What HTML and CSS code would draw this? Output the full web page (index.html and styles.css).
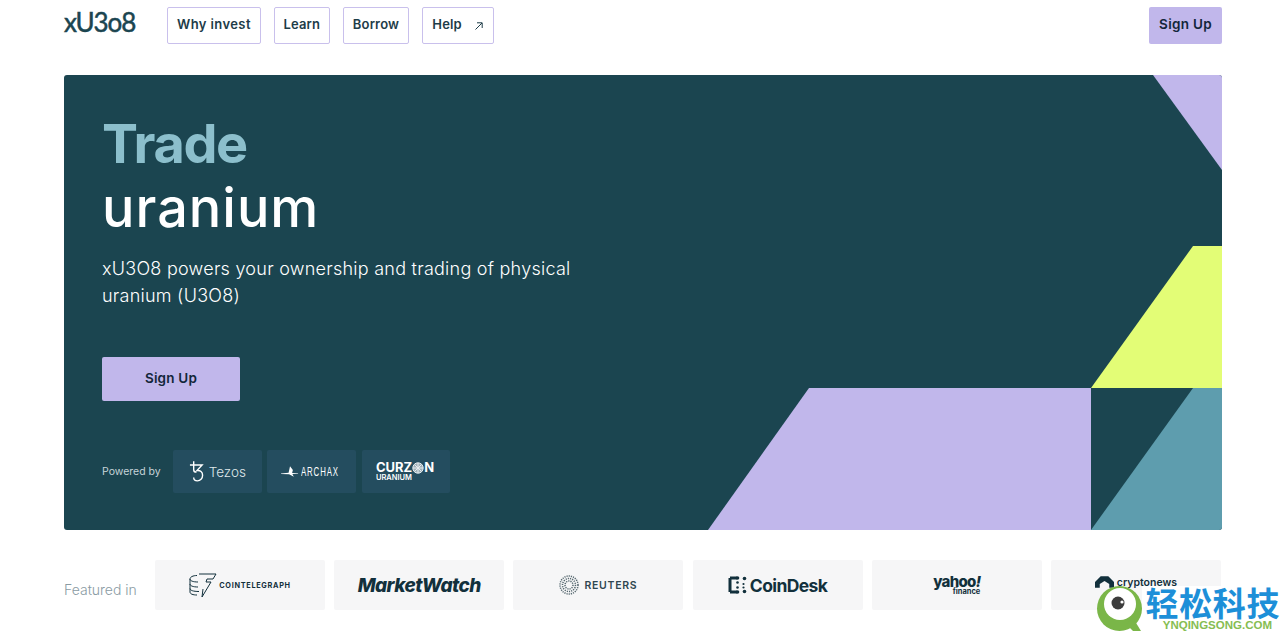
FILE: index.html
```html
<!DOCTYPE html>
<html>
  <head>
	<title>xU3O8 - Trade uranium</title>
	<meta charset="UTF-8">
	<meta name="viewport" content="width=device-width, initial-scale=1.0">
	<link rel="stylesheet" href="styles.css">
  </head>
  <body>
	<div class="page">
		<header class="topbar">
			<a class="brand">xU3o8</a>
			<nav class="menu">
				<a class="menu-item menu-why">Why invest</a>
				<a class="menu-item menu-learn">Learn</a>
				<a class="menu-item">Borrow</a>
				<a class="menu-item menu-help">Help
					<svg class="arrow" viewBox="0 0 10 10"><path d="M1.500 8.500 8 2M3 1.800h5.200V7"/></svg>
				</a>
			</nav>
			<a class="btn btn-small">Sign Up</a>
		</header>

		<section class="hero">
			<svg class="hero-art" viewBox="0 0 1158 455">
				<polygon class="lilac" points="1089,0 1158,0 1158,95"/>
				<polygon class="lime" points="1129,171 1158,171 1158,313 1027,313"/>
				<polygon class="lilac" points="745,313 1027,313 1027,455 644,455"/>
				<polygon class="teal" points="1129,313 1158,313 1158,455 1027,455"/>
			</svg>
			<h1 class="hero-title"><span class="accent">Trade</span><br>uranium</h1>
			<p class="hero-text">xU3O8 powers your ownership and trading of physical uranium (U3O8)</p>
			<a class="btn btn-large">Sign Up</a>
			<div class="powered">
				<span class="powered-label">Powered by</span>
				<div class="partner">
					<svg class="tezos-mark" viewBox="0 0 16 22"><path d="M5 0v7M1 4h13L8.500 10c3.500-.5 6 1.500 6 5 0 3.500-2.500 6-5.500 6-2.500 0-4-1.500-4-3.500M5 4v5c0 2 1 2.700 3 2.700"/></svg>
					<span class="tezos">Tezos</span>
				</div>
				<div class="partner">
					<svg class="archax-mark" viewBox="0 0 20 11"><path d="M0 7.600 8 6.800 9.500 0l3 4-.8 3 6.300.4v.5l-6 .3 1.500 2.800L8.500 8.300 0 8.200z"/></svg>
					<span class="archax">ARCHAX</span>
				</div>
				<div class="partner">
					<div class="curzon">
						<span class="curzon-name">CURZ<svg class="curzon-o" viewBox="0 0 12 12"><circle cx="6" cy="6" r="5.200"/><path d="M6 1v10M1 6h10M2.500 2.500l7 7M9.500 2.500l-7 7"/></svg>N</span>
						<span class="curzon-sub">URANIUM</span>
					</div>
				</div>
			</div>
		</section>

		<section class="featured">
			<span class="featured-label">Featured in</span>
			<div class="press">
				<div class="press-card">
					<svg class="ct-mark" viewBox="0 0 28 25"><path d="M10 1h17l-3 5h-6l-1 3h5L13 24l1-8M1 6c0-2 3-3.500 7-3.500M1 6v13c0 2 3 3 7 3M1 6c0 1.800 3 3 8 3M1 11c0 1.800 3 3 8 3M1 15.500c0 1.800 3 3 9 3"/></svg>
					<span class="ct-name">COINTELEGRAPH</span>
				</div>
				<div class="press-card">
					<span class="mw-name">MarketWatch</span>
				</div>
				<div class="press-card">
					<svg class="reuters-mark" viewBox="0 0 20 20"><circle cx="10" cy="10" r="9"/><circle cx="10" cy="10" r="6.500"/><circle cx="10" cy="10" r="4"/></svg>
					<span class="reuters-name">REUTERS</span>
				</div>
				<div class="press-card">
					<svg class="cd-mark" viewBox="0 0 18 18"><path d="M1.500 2h7M1.500 2v14M1.500 16h7"/><circle cx="9" cy="2" r="1.800"/><circle cx="9" cy="16" r="1.800"/><circle cx="16" cy="2.500" r="1.800"/><circle cx="16" cy="15.500" r="1.800"/><circle cx="9" cy="6.500" r="1.300"/><circle cx="9" cy="11.500" r="1.300"/><circle cx="15" cy="8" r="1.100"/><circle cx="15" cy="11.500" r="1.100"/></svg>
					<span class="cd-name">CoinDesk</span>
				</div>
				<div class="press-card">
					<div class="yahoo">
						<span class="yahoo-name">yahoo<i>!</i></span>
						<span class="yahoo-sub">finance</span>
					</div>
				</div>
				<div class="press-card press-top">
					<svg class="cn-mark" viewBox="0 0 20 12"><path d="M0 12V6l6-6h8l6 6v6h-5V8l-5-3-5 3v4z"/></svg>
					<span class="cn-name">cryptonews</span>
				</div>
			</div>
		</section>
	</div>

	<!-- site watermark sits over the bottom right corner -->
	<div class="watermark">
		<svg class="wm-mark" viewBox="0 0 46 45">
			<circle class="wm-ring" cx="23.500" cy="22.500" r="22.500"/>
			<path class="wm-ring" d="M30 38l7 7h8l-8-13z"/>
			<circle class="wm-hole" cx="24" cy="18" r="16"/>
			<circle class="wm-pupil" cx="22" cy="17" r="6.500"/>
			<circle class="wm-hole" cx="26" cy="16" r="1.600"/>
		</svg>
		<div class="wm-text">
			<span class="wm-cn">轻松科技</span>
			<span class="wm-en">YNQINGSONG.COM</span>
		</div>
	</div>
  </body>
</html>
```

FILE: styles.css
```css
html, body {
	margin: 0;
	height: 631px;
	overflow: hidden;
	background-color: #fff;
}

body {
	position: relative;
	font-family: Inter, "Liberation Sans", sans-serif;
	color: #14323f;
}

.page {
	padding: 0 58px 0 64px;
}

.topbar {
	display: flex;
	align-items: flex-start;
	height: 75px;
	padding-top: 7px;
	box-sizing: border-box;
}

.brand {
	width: 103px;
	font-family: Lato, sans-serif;
	font-size: 26px;
	line-height: 30px;
	letter-spacing: -1.100px;
	-webkit-text-stroke: .5px #1b4550;
	color: #1b4550;
}

.menu {
	display: flex;
	gap: 13px;
	flex-grow: 1;
}

.menu-item {
	display: flex;
	align-items: center;
	height: 37px;
	padding: 0 9px 3px;
	box-sizing: border-box;
	border: 1px solid #c9c0ec;
	border-radius: 2px;
	font-size: 13px;
	font-weight: 600;
	letter-spacing: .2px;
	color: #1d3c48;
}

.menu-why {
	letter-spacing: .4px;
}

.menu-learn {
	padding: 0 8.500px 3px;
}

.menu-help {
	gap: 12px;
}

.arrow {
	width: 10px;
	height: 10px;
	margin-top: 3px;
	fill: none;
	stroke: #1d3c48;
	stroke-width: 1;
}

.btn {
	display: flex;
	align-items: center;
	justify-content: center;
	box-sizing: border-box;
	background-color: #c1b7eb;
	border-radius: 2px;
	font-weight: 600;
	color: #12263a;
}

.btn-small {
	width: 73px;
	height: 37px;
	padding-bottom: 3px;
	font-size: 13.500px;
	letter-spacing: .3px;
}

.btn-large {
	width: 138px;
	height: 44px;
	padding-bottom: 2px;
	font-size: 13.500px;
	letter-spacing: .2px;
}

.hero {
	position: relative;
	height: 455px;
	padding: 37px 0 0 38px;
	box-sizing: border-box;
	background-color: #1b4550;
	border-radius: 3px;
	overflow: hidden;
}

.hero-art {
	position: absolute;
	top: 0;
	left: 0;
	width: 1158px;
	height: 455px;
}

.lilac { fill: #c1b7eb; }
.lime { fill: #e3fd76; }
.teal { fill: #5e9dae; }

.hero-title {
	position: relative;
	margin: 0;
	font-size: 54px;
	font-weight: 500;
	line-height: 64px;
	letter-spacing: 1px;
	color: #fff;
}

.accent {
	color: #8cbfcc;
	font-weight: 700;
	letter-spacing: -1.400px;
}

.hero-text {
	position: relative;
	width: 490px;
	margin: 15px 0 48px;
	font-size: 18px;
	font-weight: 300;
	line-height: 27px;
	letter-spacing: .25px;
	color: #fff;
}

.powered {
	position: relative;
	display: flex;
	align-items: center;
	gap: 5.700px;
	margin-top: 49px;
}

.powered-label {
	width: 65.300px;
	font-size: 10.500px;
	color: #c5d3d8;
}

.partner {
	display: flex;
	align-items: center;
	justify-content: center;
	width: 88.700px;
	height: 43px;
	background-color: #244d5f;
	border-radius: 2px;
	color: #fff;
}

.tezos-mark {
	width: 15px;
	height: 21px;
	margin-right: 5px;
	fill: none;
	stroke: #fff;
	stroke-width: 1.500;
}

.tezos {
	font-size: 13.500px;
	font-weight: 300;
	color: #dfe7ea;
}

.archax-mark {
	width: 19px;
	height: 11px;
	margin-right: 1px;
	fill: #fff;
}

.archax {
	width: 41px;
	font-family: "Liberation Sans", sans-serif;
	font-size: 13.500px;
	letter-spacing: 1.500px;
	transform: scaleX(.58);
	transform-origin: left;
	white-space: nowrap;
}

.curzon {
	display: flex;
	flex-direction: column;
	margin-right: 2px;
	font-weight: 700;
}

.curzon-name {
	display: flex;
	align-items: center;
	font-size: 13px;
	line-height: 13px;
}

.curzon-o {
	width: 12px;
	height: 12px;
	fill: #9fb0b8;
	stroke: #e6edf0;
	stroke-width: 1;
}

.curzon-sub {
	font-size: 7.500px;
	line-height: 8px;
	font-weight: 600;
}

.featured {
	display: flex;
	align-items: flex-start;
	margin-top: 30px;
}

.featured-label {
	width: 91px;
	flex-shrink: 0;
	margin-top: 21px;
	font-size: 14px;
	font-weight: 300;
	line-height: 17px;
	color: #8a9ba3;
}

.press {
	display: flex;
	gap: 9.200px;
}

.press-card {
	display: flex;
	align-items: center;
	justify-content: center;
	width: 170px;
	height: 50px;
	box-sizing: border-box;
	background-color: #f6f6f7;
	border-radius: 2px;
	color: #12303c;
}

.press-top {
	align-items: flex-start;
	padding-top: 16px;
}

.ct-mark {
	width: 28px;
	height: 25px;
	margin-right: 2px;
	fill: none;
	stroke: #12303c;
	stroke-width: 1;
}

.ct-name {
	font-size: 7.300px;
	font-weight: 700;
	letter-spacing: .7px;
}

.mw-name {
	font-size: 19px;
	font-weight: 800;
	font-style: italic;
	letter-spacing: -.6px;
}

.reuters-mark {
	width: 20px;
	height: 20px;
	margin-right: 5px;
	fill: none;
	stroke: #55676f;
	stroke-width: 1.500;
	stroke-dasharray: 1.200 1;
}

.reuters-name {
	font-size: 10.500px;
	font-weight: 600;
	letter-spacing: .7px;
	color: #2f4650;
}

.cd-mark {
	width: 19px;
	height: 18px;
	margin-right: 3px;
	fill: #12303c;
	stroke: #12303c;
	stroke-width: 0;
}

.cd-mark path {
	fill: none;
	stroke-width: 3;
}

.cd-name {
	font-size: 17.500px;
	font-weight: 700;
	letter-spacing: -.6px;
}

.yahoo {
	display: flex;
	flex-direction: column;
	align-items: flex-end;
}

.yahoo-name {
	font-size: 15px;
	line-height: 13px;
	font-weight: 800;
	letter-spacing: -.7px;
}

.yahoo-sub {
	font-size: 7.500px;
	line-height: 8px;
	font-weight: 700;
}

.cn-mark {
	width: 19px;
	height: 12px;
	margin-right: 3px;
	fill: #12303c;
}

.cn-name {
	font-size: 10.500px;
	font-weight: 600;
	line-height: 14px;
}

.watermark {
	position: absolute;
	left: 1096px;
	top: 586px;
	display: flex;
	width: 184px;
	height: 45px;
}

.wm-mark {
	width: 46px;
	height: 45px;
	flex-shrink: 0;
}

.wm-ring { fill: #7ab648; }
.wm-hole { fill: #fff; }
.wm-pupil { fill: #3c3c3c; }

.wm-text {
	display: flex;
	flex-direction: column;
	align-items: flex-end;
	width: 138px;
	background-color: #fff;
}

.wm-cn {
	font-family: "Noto Sans CJK SC", sans-serif;
	font-size: 33px;
	font-weight: 700;
	line-height: 33px;
	letter-spacing: .6px;
	color: #1d8fd8;
	white-space: nowrap;
}

.wm-en {
	margin: 1px 8px 0 0;
	font-family: "Liberation Sans", sans-serif;
	font-size: 11.500px;
	font-weight: 700;
	line-height: 11px;
	white-space: nowrap;
	color: #86bd52;
}
```
